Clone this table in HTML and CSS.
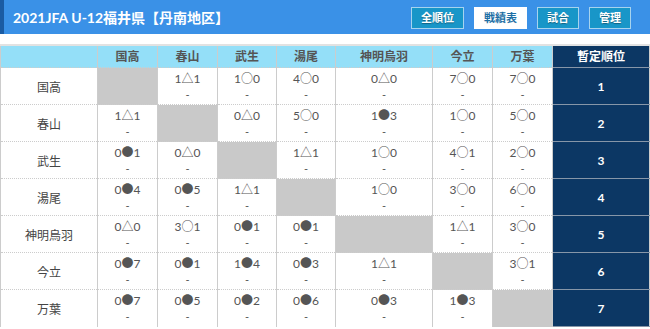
FILE: index.html
```html
<!DOCTYPE html>
<html lang="ja">
<head>
<meta charset="utf-8">
<link rel="stylesheet" href="styles.css">
</head>
<body>
<header class="bar">
  <h1 class="title">2021JFA U-12福井県【丹南地区】</h1>
  <nav class="tabs">
    <a class="tab">全順位</a>
    <a class="tab active">戦績表</a>
    <a class="tab">試合</a>
    <a class="tab">管理</a>
  </nav>
</header>
<table class="grid">
  <colgroup>
    <col class="c-name"><col class="c-s"><col class="c-s"><col class="c-n"><col class="c-n"><col class="c-name"><col class="c-s"><col class="c-s"><col class="c-rank">
  </colgroup>
  <thead>
    <tr>
      <th class="hd"></th><th class="hd">国高</th><th class="hd">春山</th><th class="hd">武生</th><th class="hd">湯尾</th><th class="hd">神明烏羽</th><th class="hd">今立</th><th class="hd">万葉</th><th class="hd rank-h">暫定順位</th>
    </tr>
  </thead>
  <tbody>
    <tr>
      <th class="name">国高</th>
      <td class="self"></td>
      <td><span class="sc">1<span class="mk">△</span>1</span><span class="dash">-</span></td>
      <td><span class="sc">1<span class="mk">○</span>0</span><span class="dash">-</span></td>
      <td><span class="sc">4<span class="mk">○</span>0</span><span class="dash">-</span></td>
      <td><span class="sc">0<span class="mk">△</span>0</span><span class="dash">-</span></td>
      <td><span class="sc">7<span class="mk">○</span>0</span><span class="dash">-</span></td>
      <td><span class="sc">7<span class="mk">○</span>0</span><span class="dash">-</span></td>
      <td class="rank">1</td>
    </tr>
    <tr>
      <th class="name">春山</th>
      <td><span class="sc">1<span class="mk">△</span>1</span><span class="dash">-</span></td>
      <td class="self"></td>
      <td><span class="sc">0<span class="mk">△</span>0</span><span class="dash">-</span></td>
      <td><span class="sc">5<span class="mk">○</span>0</span><span class="dash">-</span></td>
      <td><span class="sc">1<span class="mk">●</span>3</span><span class="dash">-</span></td>
      <td><span class="sc">1<span class="mk">○</span>0</span><span class="dash">-</span></td>
      <td><span class="sc">5<span class="mk">○</span>0</span><span class="dash">-</span></td>
      <td class="rank">2</td>
    </tr>
    <tr>
      <th class="name">武生</th>
      <td><span class="sc">0<span class="mk">●</span>1</span><span class="dash">-</span></td>
      <td><span class="sc">0<span class="mk">△</span>0</span><span class="dash">-</span></td>
      <td class="self"></td>
      <td><span class="sc">1<span class="mk">△</span>1</span><span class="dash">-</span></td>
      <td><span class="sc">1<span class="mk">○</span>0</span><span class="dash">-</span></td>
      <td><span class="sc">4<span class="mk">○</span>1</span><span class="dash">-</span></td>
      <td><span class="sc">2<span class="mk">○</span>0</span><span class="dash">-</span></td>
      <td class="rank">3</td>
    </tr>
    <tr>
      <th class="name">湯尾</th>
      <td><span class="sc">0<span class="mk">●</span>4</span><span class="dash">-</span></td>
      <td><span class="sc">0<span class="mk">●</span>5</span><span class="dash">-</span></td>
      <td><span class="sc">1<span class="mk">△</span>1</span><span class="dash">-</span></td>
      <td class="self"></td>
      <td><span class="sc">1<span class="mk">○</span>0</span><span class="dash">-</span></td>
      <td><span class="sc">3<span class="mk">○</span>0</span><span class="dash">-</span></td>
      <td><span class="sc">6<span class="mk">○</span>0</span><span class="dash">-</span></td>
      <td class="rank">4</td>
    </tr>
    <tr>
      <th class="name">神明烏羽</th>
      <td><span class="sc">0<span class="mk">△</span>0</span><span class="dash">-</span></td>
      <td><span class="sc">3<span class="mk">○</span>1</span><span class="dash">-</span></td>
      <td><span class="sc">0<span class="mk">●</span>1</span><span class="dash">-</span></td>
      <td><span class="sc">0<span class="mk">●</span>1</span><span class="dash">-</span></td>
      <td class="self"></td>
      <td><span class="sc">1<span class="mk">△</span>1</span><span class="dash">-</span></td>
      <td><span class="sc">3<span class="mk">○</span>0</span><span class="dash">-</span></td>
      <td class="rank">5</td>
    </tr>
    <tr>
      <th class="name">今立</th>
      <td><span class="sc">0<span class="mk">●</span>7</span><span class="dash">-</span></td>
      <td><span class="sc">0<span class="mk">●</span>1</span><span class="dash">-</span></td>
      <td><span class="sc">1<span class="mk">●</span>4</span><span class="dash">-</span></td>
      <td><span class="sc">0<span class="mk">●</span>3</span><span class="dash">-</span></td>
      <td><span class="sc">1<span class="mk">△</span>1</span><span class="dash">-</span></td>
      <td class="self"></td>
      <td><span class="sc">3<span class="mk">○</span>1</span><span class="dash">-</span></td>
      <td class="rank">6</td>
    </tr>
    <tr>
      <th class="name">万葉</th>
      <td><span class="sc">0<span class="mk">●</span>7</span><span class="dash">-</span></td>
      <td><span class="sc">0<span class="mk">●</span>5</span><span class="dash">-</span></td>
      <td><span class="sc">0<span class="mk">●</span>2</span><span class="dash">-</span></td>
      <td><span class="sc">0<span class="mk">●</span>6</span><span class="dash">-</span></td>
      <td><span class="sc">0<span class="mk">●</span>3</span><span class="dash">-</span></td>
      <td><span class="sc">1<span class="mk">●</span>3</span><span class="dash">-</span></td>
      <td class="self"></td>
      <td class="rank">7</td>
    </tr>
  </tbody>
</table>
</body>
</html>
```

FILE: styles.css
```css
html, body {
  margin: 0;
  padding: 0;
  background: #ffffff;
}
body {
  font-family: "Lato", "Noto Sans CJK JP", sans-serif;
  color: #555555;
}
.bar {
  height: 34px;
  background: #3a91e7;
  border-left: 4px solid #1a5ba3;
  display: flex;
  align-items: center;
  justify-content: space-between;
  padding: 0 19px 0 9px;
}
.title {
  margin: 0;
  font-size: 14px;
  font-weight: bold;
  color: #ffffff;
  letter-spacing: 0;
  padding-bottom: 1px;
}
.tabs {
  display: flex;
  gap: 10px;
  margin-top: 2px;
}
.tab {
  height: 20px;
  line-height: 20px;
  padding: 0 9px;
  border: 1px solid #a6d3ee;
  background: #1896c8;
  color: #ffffff;
  font-size: 11px;
  font-weight: bold;
  text-shadow: 0 1px 1px rgba(0,0,0,0.35);
}
.tab.active {
  background: #ffffff;
  border-color: #ffffff;
  color: #1d6fa5;
  text-shadow: none;
}
.grid {
  margin-top: 10px;
  width: 649px;
  table-layout: fixed;
  border-collapse: collapse;
  border-top: 2px solid #e2e2e2;
  border-left: 1px solid #cccccc;
}
.c-name { width: 97px; }
.c-s { width: 60px; }
.c-n { width: 59px; }
.c-rank { width: 97px; }
.grid th, .grid td {
  padding: 0;
  text-align: center;
  border-left: 1px solid #cccccc;
  border-right: 1px solid #cccccc;
}
.hd {
  height: 21px;
  background: #94dff8;
  font-size: 12px;
  font-weight: bold;
  color: #555555;
  line-height: 14px;
}
.grid tbody tr {
  border-top: 1px dotted #cccccc;
}
.grid tbody td, .grid tbody th {
  height: 36px;
}
.name {
  font-size: 12px;
  font-weight: normal;
  color: #444444;
}
.sc, .dash {
  display: block;
  font-size: 12px;
  line-height: 16px;
  color: #555555;
}
.mk {
  font-family: "Noto Sans CJK JP", sans-serif;
  font-size: 12px;
  color: #555555;
}
.dash {
  font-size: 11px;
}
.self {
  background: #c9c9c9;
}
.rank, .rank-h {
  background: #0c3764;
  color: #ffffff;
  font-weight: bold;
  font-size: 12px;
  border: 1px solid #8796a8;
}
.grid tbody td.rank {
  border-top: 1px solid #8796a8;
}
```
